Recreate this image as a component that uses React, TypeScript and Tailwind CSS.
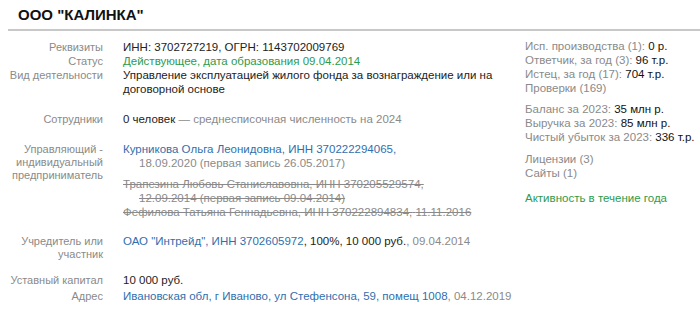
import React from "react";

const labelCls =
  "w-[103px] shrink-0 text-right text-[11px] leading-[13px] text-[#8a8a8a] pt-[1px]";
const valueCls = "ml-[20px] w-[395px] text-[11.5px] leading-[14px] text-[#222]";

function Row({
  label,
  className = "",
  children,
}: {
  label: React.ReactNode;
  className?: string;
  children: React.ReactNode;
}) {
  return (
    <div className={`flex items-start ${className}`}>
      <div className={labelCls}>{label}</div>
      <div className={valueCls}>{children}</div>
    </div>
  );
}

function Stat({ label, value }: { label: string; value?: string }) {
  return (
    <div>
      <span className="text-[#8a8a8a]">{label}</span>
      {value && <span className="text-[#111]">{value}</span>}
    </div>
  );
}

export default function App() {
  return (
    <div
      className="w-[700px] h-[319px] overflow-hidden bg-white"
      style={{ fontFamily: '"Liberation Sans", Arial, sans-serif' }}
    >
      <div className="pl-[18px] pt-[6px] h-[29px] text-[15px] font-bold leading-[18px] text-[#111]">
        ООО "КАЛИНКА"
      </div>
      <div className="ml-[8px] h-[2px] bg-[#c8c8c8]" />

      <div className="flex">
        <div className="pt-[9px]">
          <Row label="Реквизиты">ИНН: 3702727219, ОГРН: 1143702009769</Row>
          <Row label="Статус">
            <span className="text-[#2e9a4e]">
              Действующее, дата образования 09.04.2014
            </span>
          </Row>
          <Row label="Вид деятельности">
            Управление эксплуатацией жилого фонда за вознаграждение или на
            договорной основе
          </Row>

          <Row label="Сотрудники" className="mt-[16px]">
            0 человек{" "}
            <span className="text-[#8a8a8a]">
              — среднесписочная численность на 2024
            </span>
          </Row>

          <Row
            label={
              <>
                Управляющий -<br />
                индивидуальный
                <br />
                предприниматель
              </>
            }
            className="mt-[16px]"
          >
            <div className="pl-[16px] -indent-[16px]">
              <span className="text-[#2f6fae]">
                Курникова Ольга Леонидовна, ИНН 370222294065,
              </span>{" "}
              <span className="whitespace-nowrap text-[#8a8a8a]">
                18.09.2020 (первая запись 26.05.2017)
              </span>
            </div>
            <div className="mt-[7px] pl-[16px] -indent-[16px] line-through text-[#8a8a8a]">
              Трапезина Любовь Станиславовна, ИНН 370205529574,{" "}
              <span className="whitespace-nowrap">
                12.09.2014 (первая запись 09.04.2014)
              </span>
            </div>
            <div className="pl-[16px] -indent-[16px] line-through text-[#8a8a8a]">
              Фефилова Татьяна Геннадьевна, ИНН 370222894834,{" "}
              <span className="whitespace-nowrap">11.11.2016</span>
            </div>
          </Row>

          <Row
            label={
              <>
                Учредитель или
                <br />
                участник
              </>
            }
            className="mt-[15px]"
          >
            <span className="text-[#2f6fae]">
              ОАО "Интрейд", ИНН 3702605972
            </span>
            , 100%, 10 000 руб.
            <span className="text-[#8a8a8a]">, 09.04.2014</span>
          </Row>

          <Row label="Уставный капитал" className="mt-[12px]">
            10 000 руб.
          </Row>
          <Row label="Адрес" className="mt-[2px]">
            <span className="text-[#2f6fae]">
              Ивановская обл, г Иваново, ул Стефенсона, 59, помещ 1008
            </span>
            <span className="text-[#8a8a8a]">, </span>
            <span className="whitespace-nowrap text-[#8a8a8a]">04.12.2019</span>
          </Row>
        </div>

        <div className="ml-[7px] pt-[8px] text-[11.5px] leading-[14px]">
          <Stat label="Исп. производства (1): " value="0 р." />
          <Stat label="Ответчик, за год (3): " value="96 т.р." />
          <Stat label="Истец, за год (17): " value="704 т.р." />
          <Stat label="Проверки (169)" />

          <div className="mt-[7px]">
            <Stat label="Баланс за 2023: " value="35 млн р." />
            <Stat label="Выручка за 2023: " value="85 млн р." />
            <Stat label="Чистый убыток за 2023: " value="336 т.р." />
          </div>

          <div className="mt-[8px]">
            <Stat label="Лицензии (3)" />
            <Stat label="Сайты (1)" />
          </div>

          <div className="mt-[11px] text-[#2e9a4e]">Активность в течение года</div>
        </div>
      </div>
    </div>
  );
}
